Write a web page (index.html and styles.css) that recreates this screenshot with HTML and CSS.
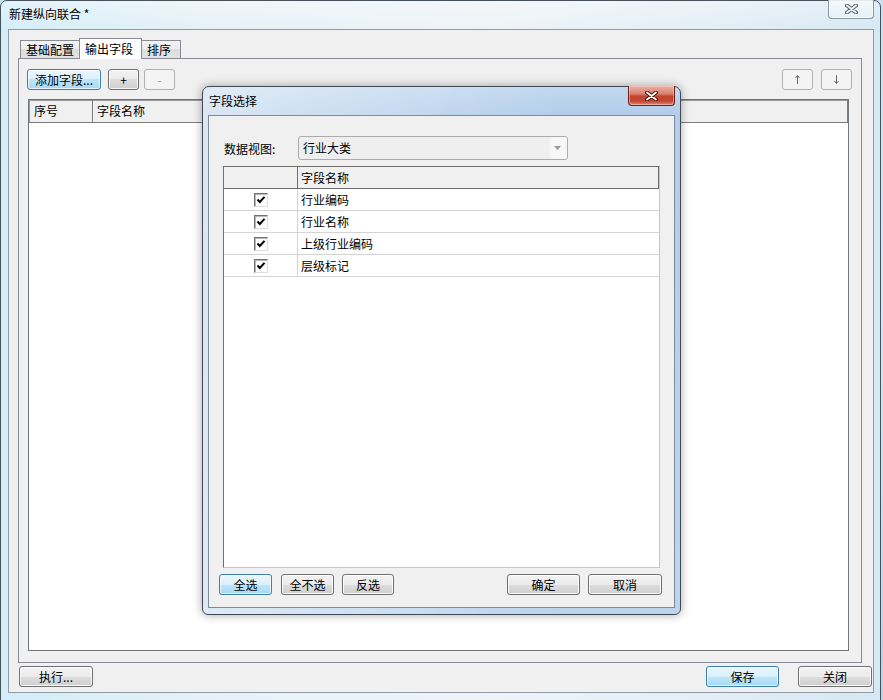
FILE: index.html
```html
<!DOCTYPE html>
<html lang="zh-CN">
<head>
<meta charset="utf-8">
<title>新建纵向联合</title>
<link rel="stylesheet" href="styles.css">
</head>
<body>
<div class="screen">
  <div class="mainwin">
    <div class="titlebar">
      <span class="title">新建纵向联合 *</span>
      <div class="closebtn inactive">
        <svg width="13" height="10" viewBox="0 0 13 10"><path d="M2 1.5 L11 8.5 M11 1.5 L2 8.5" stroke="#5e6873" stroke-width="4" stroke-linecap="round"/><path d="M2 1.5 L11 8.5 M11 1.5 L2 8.5" stroke="#f4f6f8" stroke-width="1.8" stroke-linecap="round"/></svg>
      </div>
    </div>
    <div class="client">
      <div class="tabs">
        <div class="tab t1">基础配置</div>
        <div class="tab t2 sel">输出字段</div>
        <div class="tab t3">排序</div>
      </div>
      <div class="panel">
        <div class="toolbar">
          <button class="btn focus w74">添加字段...</button>
          <button class="btn w31 gap7">+</button>
          <button class="btn w31 gap5 disabled">-</button>
          <span class="spacer"></span>
          <button class="btn w31 disabled">
            <svg width="7" height="11" viewBox="0 0 7 11"><path d="M3.5 1.5 V10 M1.5 4 L3.5 1.5 L5.5 4" stroke="#6a6a6a" stroke-width="1" fill="none"/></svg>
          </button>
          <button class="btn w31 gap8 disabled">
            <svg width="7" height="11" viewBox="0 0 7 11"><path d="M3.5 1 V9.5 M1.5 7 L3.5 9.5 L5.5 7" stroke="#6a6a6a" stroke-width="1" fill="none"/></svg>
          </button>
        </div>
        <div class="lv">
          <div class="lvhead">
            <div class="lvh c-no">序号</div>
            <div class="lvh c-name">字段名称</div>
          </div>
        </div>
      </div>
      <div class="bottombar">
        <button class="btn w74">执行...</button>
        <span class="spacer"></span>
        <button class="btn focus w73">保存</button>
        <button class="btn w74 gap19">关闭</button>
      </div>
    </div>
  </div>

  <div class="dialog">
    <div class="dtitlebar">
      <span class="dtitle">字段选择</span>
      <div class="closebtn active">
        <svg width="13" height="10" viewBox="0 0 13 10"><path d="M2 1.5 L11 8.5 M11 1.5 L2 8.5" stroke="#4a1a12" stroke-width="4" stroke-linecap="round"/><path d="M2 1.5 L11 8.5 M11 1.5 L2 8.5" stroke="#ffffff" stroke-width="1.8" stroke-linecap="round"/></svg>
      </div>
    </div>
    <div class="dclient">
      <div class="viewrow">
        <span class="vlabel">数据视图:</span>
        <div class="combo">
          <span class="cb-text">行业大类</span>
          <span class="cb-btn"><svg width="7" height="4" viewBox="0 0 7 4"><path d="M0 0 H7 L3.5 4 Z" fill="#9a9a9a"/></svg></span>
        </div>
      </div>
      <div class="grid">
        <div class="grow ghead">
          <div class="gc g1"></div>
          <div class="gc g2">字段名称</div>
        </div>
        <div class="grow">
          <div class="gc g1"><span class="chk"><svg width="12" height="12" viewBox="0 0 12 12"><path d="M2.5 5.5 L4.8 8 L9.5 2.8" stroke="#000" stroke-width="2" fill="none"/></svg></span></div>
          <div class="gc g2">行业编码</div>
        </div>
        <div class="grow">
          <div class="gc g1"><span class="chk"><svg width="12" height="12" viewBox="0 0 12 12"><path d="M2.5 5.5 L4.8 8 L9.5 2.8" stroke="#000" stroke-width="2" fill="none"/></svg></span></div>
          <div class="gc g2">行业名称</div>
        </div>
        <div class="grow">
          <div class="gc g1"><span class="chk"><svg width="12" height="12" viewBox="0 0 12 12"><path d="M2.5 5.5 L4.8 8 L9.5 2.8" stroke="#000" stroke-width="2" fill="none"/></svg></span></div>
          <div class="gc g2">上级行业编码</div>
        </div>
        <div class="grow">
          <div class="gc g1"><span class="chk"><svg width="12" height="12" viewBox="0 0 12 12"><path d="M2.5 5.5 L4.8 8 L9.5 2.8" stroke="#000" stroke-width="2" fill="none"/></svg></span></div>
          <div class="gc g2">层级标记</div>
        </div>
      </div>
      <div class="dbuttons">
        <button class="btn focus w53">全选</button>
        <button class="btn w53 gap9">全不选</button>
        <button class="btn w52 gap8">反选</button>
        <span class="spacer"></span>
        <button class="btn w73">确定</button>
        <button class="btn w74 gap8">取消</button>
      </div>
    </div>
  </div>
</div>
</body>
</html>
```

FILE: styles.css
```css
* { box-sizing: border-box; }
html, body { margin: 0; padding: 0; }
body {
  font-family: "Noto Sans CJK SC", "Microsoft YaHei", "DejaVu Sans", sans-serif;
  font-size: 12px;
  color: #000;
}
.screen {
  position: relative;
  width: 883px;
  height: 700px;
  overflow: hidden;
  background: linear-gradient(180deg, #c9e0f0 0%, #d9e9f4 40%, #b9d4e8 100%);
}

/* main window */
.mainwin {
  width: 881px;
  height: 712px;
  border: 1px solid #46515c;
  border-radius: 7px 7px 0 0;
  padding: 0 6px 0 7px;
  background:
    linear-gradient(180deg, rgba(255,255,255,0.35) 0, rgba(255,255,255,0) 30px),
    linear-gradient(90deg, #d3edf8 0, #e7f1f7 25%, #eef3f7 55%, #e3eef6 80%, #d6e8f3 100%);
  display: flex;
  flex-direction: column;
}
.titlebar {
  height: 28px;
  display: flex;
  justify-content: space-between;
  align-items: flex-start;
  flex: none;
}
.title {
  padding-left: 1px;
  line-height: 26px;
}
.closebtn {
  display: flex;
  align-items: center;
  justify-content: center;
  border-radius: 0 0 4px 4px;
}
.closebtn.inactive {
  width: 46px;
  height: 19px;
  margin-top: -1px;
  border: 1px solid #8897a6;
  border-top: none;
  background: linear-gradient(180deg, rgba(255,255,255,0.55), rgba(235,243,249,0.6));
  box-shadow: inset 0 0 0 1px rgba(255,255,255,0.7);
}
.closebtn.active {
  width: 47px;
  height: 20px;
  margin-top: -1px;
  border: 1px solid #6b2419;
  border-top: none;
  background: linear-gradient(180deg, #eab1a5 0%, #d98272 40%, #c1432c 55%, #c54a33 80%, #dd8a78 100%);
  box-shadow: inset 0 0 0 1px rgba(255,220,210,0.45);
}
.client {
  height: 664px;
  flex: none;
  border: 1px solid #8f9ba7;
  background: #f0f0f0;
  display: flex;
  flex-direction: column;
}

/* tabs */
.tabs {
  height: 28px;
  flex: none;
  display: flex;
  align-items: flex-end;
  padding-left: 11px;
}
.tab {
  height: 18px;
  border: 1px solid #898c95;
  border-bottom: none;
  background: linear-gradient(180deg, #f3f3f3 0%, #ebebeb 50%, #dedede 50%, #e2e2e2 100%);
  line-height: 17px;
  padding-left: 5px;
  white-space: nowrap;
}
.t1 { width: 60px; }
.t2 { width: 63px; margin-left: -1px; }
.t3 { width: 40px; margin-left: -1px; }
.tab.sel {
  height: 21px;
  margin-bottom: -1px;
  background: #ffffff;
  line-height: 19px;
  position: relative;
  z-index: 1;
}
.panel {
  height: 605px;
  flex: none;
  margin: 0 11px 0 9px;
  border: 1px solid #898c95;
  background: #f0f0f0;
  display: flex;
  flex-direction: column;
  padding: 10px 9px 11px 8px;
}
.toolbar {
  display: flex;
  height: 21px;
  flex: none;
}
.spacer { flex: 1; }

/* buttons */
.btn {
  height: 21px;
  padding: 0;
  margin: 0;
  font: inherit;
  color: #000;
  border: 1px solid #707070;
  border-radius: 3px;
  background: linear-gradient(180deg, #f2f2f2 0%, #ebebeb 50%, #dddddd 50%, #cfcfcf 100%);
  box-shadow: inset 0 0 0 1px rgba(255,255,255,0.85);
  display: flex;
  align-items: center;
  justify-content: center;
  line-height: 18px;
  flex: none;
}
.btn.focus {
  border-color: #3c7fb1;
  background: linear-gradient(180deg, #eaf6fd 0%, #d9f0fc 50%, #bee6fd 50%, #a7d9f5 100%);
  box-shadow: inset 0 0 0 1px rgba(255,255,255,0.7);
}
.btn.disabled {
  border-color: #adb2b5;
  background: #f4f4f4;
  color: #9a9a9a;
  box-shadow: none;
}
.w31 { width: 31px; }
.w52 { width: 52px; }
.w53 { width: 53px; }
.w73 { width: 73px; }
.w74 { width: 74px; }
.gap5 { margin-left: 5px; }
.gap7 { margin-left: 7px; }
.gap8 { margin-left: 8px; }
.gap9 { margin-left: 9px; }
.gap19 { margin-left: 19px; }

/* main list view */
.lv {
  flex: 1;
  margin: 9px 3px 0 1px;
  border: 1px solid #6f7479;
  background: #ffffff;
}
.lvhead {
  display: flex;
  height: 23px;
  background: #f0f0f0;
  border-bottom: 1px solid #7d7d7d;
  box-shadow: inset 1px 1px 0 #9a9a9a;
}
.lvh {
  line-height: 22px;
  padding-left: 5px;
}
.c-no { width: 64px; border-right: 1px solid #7d7d7d; }
.c-name { flex: 1; padding-left: 4px; border-right: 1px solid #7d7d7d; }

.bottombar {
  display: flex;
  height: 21px;
  margin-top: 3px;
  padding: 0 1px 0 10px;
  flex: none;
}

/* dialog window */
.dialog {
  position: absolute;
  left: 202px;
  top: 86px;
  width: 479px;
  height: 529px;
  border: 1px solid #3f4a56;
  border-radius: 7px 7px 6px 6px;
  padding: 0 5px 6px 5px;
  background:
    linear-gradient(90deg, rgba(255,255,255,0.5) 0, rgba(255,255,255,0.25) 40%, rgba(255,255,255,0) 75%),
    linear-gradient(180deg, #c2d8ef 0, #b3cdea 28px, #bcd4ee 100%);
  box-shadow: 0 0 10px rgba(0,0,0,0.35);
  display: flex;
  flex-direction: column;
}
.dtitlebar {
  height: 28px;
  flex: none;
  display: flex;
  justify-content: space-between;
  align-items: flex-start;
}
.dtitle {
  padding-left: 1px;
  line-height: 28px;
}
.dclient {
  height: 493px;
  flex: none;
  border: 1px solid #7d8c9b;
  background: #f0f0f0;
  display: flex;
  flex-direction: column;
}
.viewrow {
  display: flex;
  align-items: center;
  height: 24px;
  margin-top: 20px;
  padding-left: 15px;
  flex: none;
}
.vlabel { width: 74px; }
.combo {
  width: 270px;
  height: 24px;
  border: 1px solid #acacac;
  border-radius: 3px;
  background: #efefef;
  display: flex;
  overflow: hidden;
}
.cb-text {
  flex: 1;
  padding-left: 4px;
  line-height: 22px;
}
.cb-btn {
  width: 17px;
  background: #f7f7f7;
  display: flex;
  align-items: center;
  justify-content: center;
  padding-right: 2px;
}
.grid {
  flex: 1;
  margin: 6px 14px 0 14px;
  border: 1px solid;
  border-color: #6e6e6e #c6c6c6 #c6c6c6 #6e6e6e;
  background: #ffffff;
}
.grow {
  display: flex;
  height: 22px;
  border-bottom: 1px solid #d4d4d4;
}
.gc {
  line-height: 21px;
}
.g1 {
  width: 74px;
  border-right: 1px solid #d4d4d4;
  display: flex;
  align-items: center;
  justify-content: center;
}
.g2 { flex: 1; padding-left: 3px; }
.ghead {
  background: #f0f0f0;
  border-bottom: 1px solid #6e6e6e;
  border-right: 1px solid #6e6e6e;
}
.ghead .g1 { border-right-color: #6e6e6e; }
.chk {
  width: 14px;
  height: 14px;
  border: 1px solid;
  border-color: #727272 #dedede #dedede #727272;
  box-shadow: inset 1px 1px 0 #b8b8b8;
  background: #ffffff;
  display: flex;
  align-items: center;
  justify-content: center;
}
.dbuttons {
  display: flex;
  height: 21px;
  margin-top: 6px;
  margin-bottom: 12px;
  padding: 0 12px 0 10px;
  flex: none;
}
```
